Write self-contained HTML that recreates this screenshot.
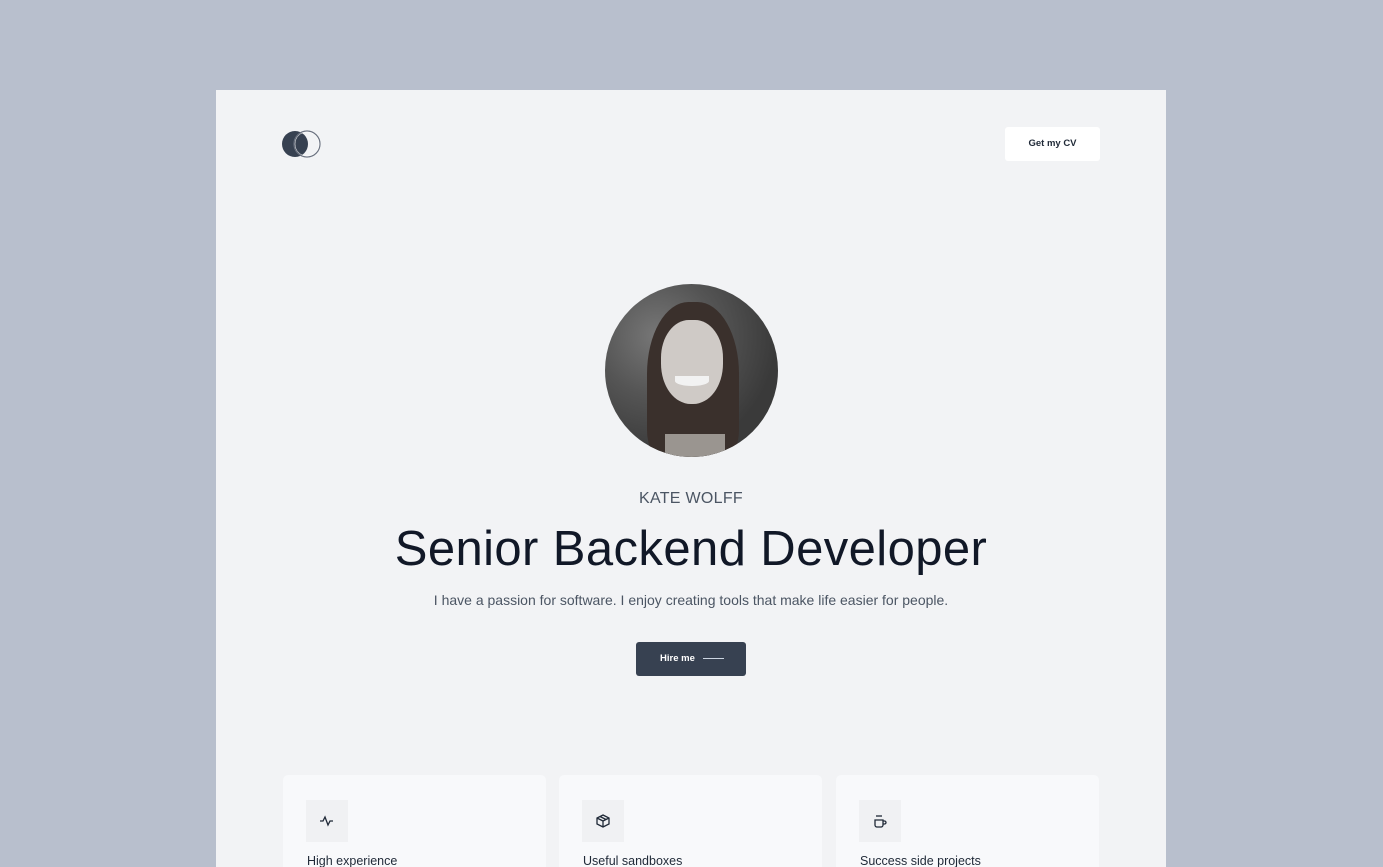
<!DOCTYPE html>
<html><head><meta charset="utf-8"><style>
*{margin:0;padding:0;box-sizing:border-box}
html,body{width:1383px;height:867px;overflow:hidden}
body{background:#b8bfcd;font-family:"Liberation Sans",sans-serif;position:relative}
.card{position:absolute;left:216px;top:90px;width:950px;height:777px;background:#f2f3f5;overflow:hidden}
.abs{position:absolute}
.cv{left:789px;top:37px;width:95px;height:34px;background:#fff;border-radius:3px;font-size:9.5px;font-weight:bold;color:#1f2937;text-align:center;line-height:34px}
.photo{left:389px;top:194px;width:173px;height:173px;border-radius:50%;overflow:hidden;background:radial-gradient(circle at 30% 30%,#777 0,#555 35%,#3a3a3a 70%)}
.c{text-align:center;width:950px;left:0}
.f{width:263px;height:120px;background:#f8f9fb;border-radius:5px;top:685px}
.ib{left:23px;top:25px;width:42px;height:42px;background:#f0f1f3}
.ib svg{position:absolute;left:13px;top:13px}
.ft{left:24px;top:79px;font-size:12.5px;color:#1f2937}
</style></head><body>
<div class="card">
<svg class="abs" style="left:64px;top:38px" width="44" height="32"><circle cx="15" cy="16" r="13" fill="#374151"/><circle cx="27" cy="16" r="13" fill="none" stroke="#6b7280" stroke-width="1.2"/><circle cx="27" cy="16" r="12" fill="none" stroke="#fff" stroke-width="0.5"/></svg>
<div class="abs cv">Get my CV</div>
<div class="abs photo">
<div class="abs" style="left:42px;top:18px;width:92px;height:160px;border-radius:45% 45% 20% 20%;background:#3a302c"></div>
<div class="abs" style="left:56px;top:36px;width:62px;height:84px;border-radius:45% 45% 48% 48%;background:#cfcac6"></div>
<div class="abs" style="left:70px;top:92px;width:34px;height:10px;border-radius:0 0 50% 50%;background:#f2f2f2"></div>
<div class="abs" style="left:60px;top:150px;width:60px;height:30px;background:#9a9590"></div>
</div>
<div class="abs c" style="top:400px;font-size:16px;color:#4b5563;letter-spacing:0.3px">KATE WOLFF</div>
<div class="abs c" style="top:431px;font-size:49px;color:#111827;letter-spacing:0.4px">Senior Backend Developer</div>
<div class="abs c" style="top:502px;font-size:14px;color:#4b5563">I have a passion for software. I enjoy creating tools that make life easier for people.</div>
<div class="abs" style="left:420px;top:552px;width:110px;height:34px;background:#374151;border-radius:3px;color:#fff;font-size:9.5px;font-weight:bold;line-height:34px;padding-left:24px">Hire me<span style="display:inline-block;width:21px;height:1px;background:#cbd5e1;vertical-align:middle;margin-left:8px"></span></div>
<div class="abs f" style="left:67px"><div class="abs ib"><svg width="16" height="16" fill="none" stroke="#1f2937" stroke-width="1.3"><path d="M1 8h3l2-4 3 8 2-4h3"/></svg></div><div class="abs ft">High experience</div></div>
<div class="abs f" style="left:343px"><div class="abs ib"><svg width="16" height="16" fill="none" stroke="#1f2937" stroke-width="1.3"><path d="M8 2l6 3v6l-6 3-6-3V5zM2 5l6 3 6-3M8 8v6M5 3.5l6 3"/></svg></div><div class="abs ft">Useful sandboxes</div></div>
<div class="abs f" style="left:620px"><div class="abs ib"><svg width="16" height="16" fill="none" stroke="#1f2937" stroke-width="1.3"><path d="M3 7h8v5a2 2 0 0 1-2 2H5a2 2 0 0 1-2-2zM11 8h1.5a1.5 1.5 0 0 1 0 3H11M5 2v2M7 2v2M9 2v2"/></svg></div><div class="abs ft">Success side projects</div></div>
</div>
</body></html>
